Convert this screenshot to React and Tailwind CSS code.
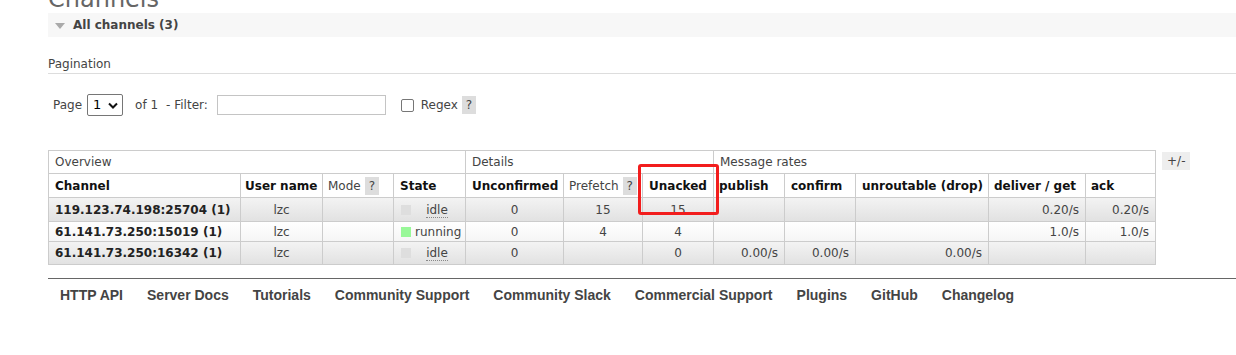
import React from "react";

const F = { fontFamily: '"DejaVu Sans", Verdana, sans-serif' };

function Help() {
  return (
    <span className="inline-block bg-[#dddddd] text-[#444] px-[4px] leading-[18px] ml-[4px]">?</span>
  );
}

function State({ running }) {
  return (
    <div className="flex items-center">
      <span className={"inline-block shrink-0 w-[10px] h-[10px] ml-[1px] " + (running ? "bg-[#98f898]" : "bg-[#dedede]")} />
      <span className="flex-1 text-center ml-[4px]">
        {running ? (
          "running"
        ) : (
          <span className="border-b border-dotted border-[#888] leading-[13px] inline-block">idle</span>
        )}
      </span>
    </div>
  );
}

const rows = [
  { ch: "119.123.74.198:25704 (1)", st: false, unc: "0", pre: "15", una: "15", pub: "", con: "", unr: "", del: "0.20/s", ack: "0.20/s", h: "h-[24px]", alt: true },
  { ch: "61.141.73.250:15019 (1)", st: true, unc: "0", pre: "4", una: "4", pub: "", con: "", unr: "", del: "1.0/s", ack: "1.0/s", h: "h-[20px]", alt: false },
  { ch: "61.141.73.250:16342 (1)", st: false, unc: "0", pre: "", una: "0", pub: "0.00/s", con: "0.00/s", unr: "0.00/s", del: "", ack: "", h: "h-[23px]", alt: true },
];

export default function App() {
  const td = "border border-[#cccccc] px-[6px] py-0 whitespace-nowrap";
  return (
    <div className="relative bg-white w-[1236px] h-[355px] overflow-hidden text-[12px] text-[#444]" style={F}>
      <div className="pl-[48px]">
        <h1 className="-mt-[13px] h-[24px] text-[24px] leading-[24px] text-[#666] font-normal">Channels</h1>
        <div className="mt-[2px] h-[24px] bg-[#f7f7f7] flex items-center">
          <svg width="10" height="6" viewBox="0 0 10 6" className="ml-[7px] mt-[1px]">
            <polygon points="0,0 10,0 5,6" fill="#aaaaaa" />
          </svg>
          <span className="ml-[8px] font-bold text-[12px] text-[#444]">All channels (3)</span>
        </div>
        <div className="mt-[19px] leading-[16px] pb-[1px] border-b border-[#dddddd]">Pagination</div>
        <div className="mt-[20px] flex items-center h-[22px]">
          <span className="ml-[5px]">Page</span>
          <div className="ml-[5px] w-[36px] h-[22px] border border-[#767676] rounded-[2px] flex items-center justify-between pl-[5px] pr-[4px] text-[13px] text-black">
            <span>1</span>
            <svg width="10" height="7" viewBox="0 0 10 7">
              <polyline points="1,1.5 5,5.5 9,1.5" fill="none" stroke="#111" strokeWidth="2" />
            </svg>
          </div>
          <span className="ml-[12px]">of 1</span>
          <span className="ml-[8px]">- Filter:</span>
          <div className="ml-[9px] w-[169px] h-[20px] border border-[#c4c4c4]" />
          <div className="ml-[15px] w-[13px] h-[13px] border border-[#767676] rounded-[2px]" />
          <span className="ml-[7px]">Regex</span>
          <span className="ml-[0px]"><Help /></span>
        </div>
        <div className="mt-[34px] flex items-start">
          <table className="table-fixed border-collapse w-[1107px] text-[12px]">
            <colgroup>
              <col className="w-[192px]" />
              <col className="w-[82px]" />
              <col className="w-[71px]" />
              <col className="w-[72px]" />
              <col className="w-[98px]" />
              <col className="w-[79px]" />
              <col className="w-[71px]" />
              <col className="w-[71px]" />
              <col className="w-[71px]" />
              <col className="w-[133px]" />
              <col className="w-[97px]" />
              <col className="w-[70px]" />
            </colgroup>
            <thead>
              <tr className="h-[23px] text-left">
                <th colSpan={4} className={td + " font-normal text-[#444]"}>Overview</th>
                <th colSpan={3} className={td + " font-normal text-[#444]"}>Details</th>
                <th colSpan={5} className={td + " font-normal text-[#444]"}>Message rates</th>
              </tr>
              <tr className="h-[24px] text-left text-[#111]">
                <th className={td + " font-bold"}>Channel</th>
                <th className={td + " font-bold !px-[4px]"}>User name</th>
                <th className={td + " font-normal text-[#444] !pl-[5px]"}>Mode<Help /></th>
                <th className={td + " font-bold"}>State</th>
                <th className={td + " font-bold"}>Unconfirmed</th>
                <th className={td + " font-normal text-[#444] !pl-[5px]"}>Prefetch<Help /></th>
                <th className={td + " font-bold"}>Unacked</th>
                <th className={td + " font-bold !pl-[5px]"}>publish</th>
                <th className={td + " font-bold"}>confirm</th>
                <th className={td + " font-bold"}>unroutable (drop)</th>
                <th className={td + " font-bold !pl-[5px]"}>deliver / get</th>
                <th className={td + " font-bold !pl-[5px]"}>ack</th>
              </tr>
            </thead>
            <tbody>
              {rows.map((r, i) => (
                <tr
                  key={i}
                  className={
                    r.h +
                    " " +
                    (r.alt
                      ? "bg-gradient-to-b from-[#f3f3f3] to-[#e1e1e1]"
                      : "bg-gradient-to-b from-white to-[#f5f5f5]")
                  }
                >
                  <td className={td + " font-bold text-[#222]"}>{r.ch}</td>
                  <td className={td + " text-center"}>lzc</td>
                  <td className={td}></td>
                  <td className={td}><State running={r.st} /></td>
                  <td className={td + " text-center"}>{r.unc}</td>
                  <td className={td + " text-center"}>{r.pre}</td>
                  <td className={td + " text-center"}>{r.una}</td>
                  <td className={td + " text-right"}>{r.pub}</td>
                  <td className={td + " text-right"}>{r.con}</td>
                  <td className={td + " text-right"}>{r.unr}</td>
                  <td className={td + " text-right"}>{r.del}</td>
                  <td className={td + " text-right"}>{r.ack}</td>
                </tr>
              ))}
            </tbody>
          </table>
          <span className="ml-[6px] mt-[2px] bg-[#eeeeee] px-[5px] leading-[18px] text-[#444]">+/-</span>
        </div>
        <div
          className="mt-[13px] border-t border-[#666] pt-[6px] flex text-[14px] font-bold text-[#444] leading-[20px]"
          style={{ fontFamily: '"Liberation Sans", Arial, sans-serif' }}
        >
          {["HTTP API", "Server Docs", "Tutorials", "Community Support", "Community Slack", "Commercial Support", "Plugins", "GitHub", "Changelog"].map((t) => (
            <span key={t} className="px-[12px]">{t}</span>
          ))}
        </div>
      </div>
      <div className="absolute left-[638px] top-[164px] w-[81px] h-[51px] border-[3px] border-[#f21d1d] rounded-[3px]" />
    </div>
  );
}
